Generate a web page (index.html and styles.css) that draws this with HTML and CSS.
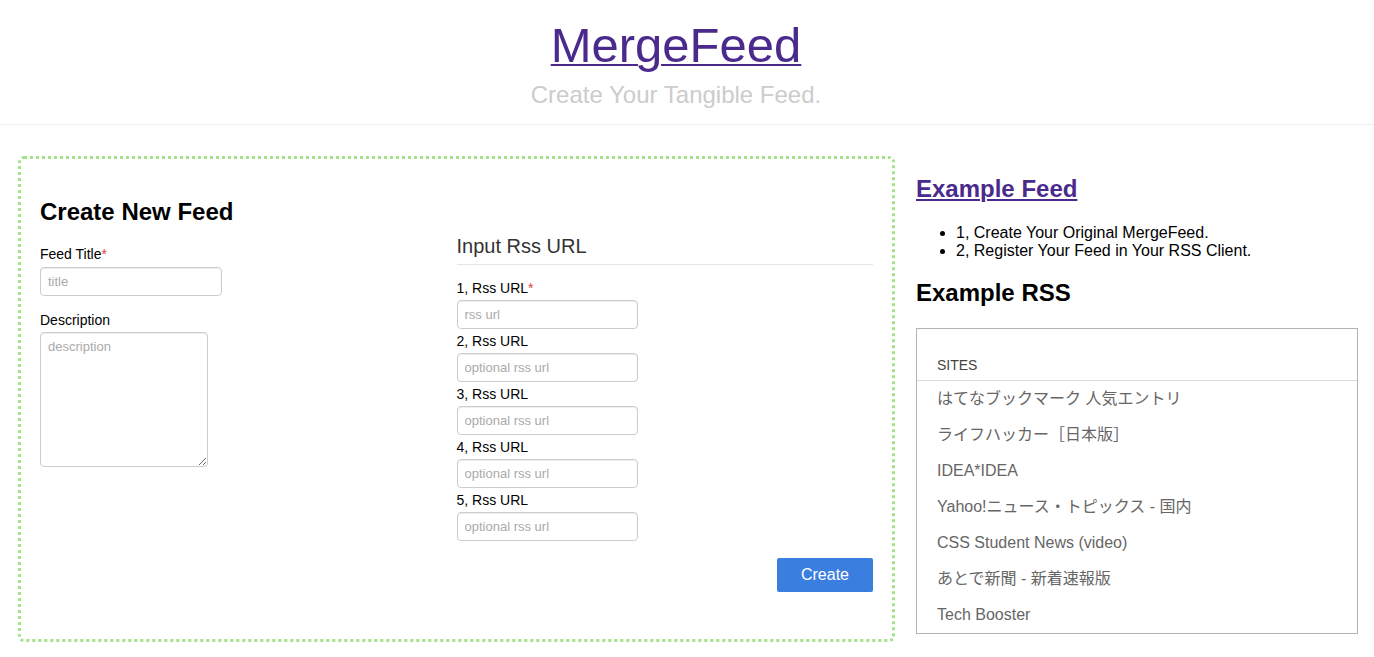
FILE: index.html
```html
<!DOCTYPE html>
<html lang="ja">
<head>
<meta charset="utf-8">
<title>MergeFeed</title>
<link rel="stylesheet" href="styles.css">
</head>
<body>
<header class="header">
  <h1 class="site-title"><a href="#">MergeFeed</a></h1>
  <p class="tagline">Create Your Tangible Feed.</p>
</header>
<div class="main">
  <form class="panel">
    <div class="col-left">
      <h2 class="form-title">Create New Feed</h2>
      <label class="field-label">Feed Title<span class="req">*</span></label>
      <input class="text-input title-input" type="text" placeholder="title">
      <label class="field-label desc-label">Description</label>
      <textarea class="text-area" placeholder="description"></textarea>
    </div>
    <div class="col-right">
      <div class="legend">Input Rss URL</div>
      <label class="field-label url-label">1, Rss URL<span class="req">*</span></label>
      <input class="text-input url-input" type="text" placeholder="rss url">
      <label class="field-label url-label">2, Rss URL</label>
      <input class="text-input url-input" type="text" placeholder="optional rss url">
      <label class="field-label url-label">3, Rss URL</label>
      <input class="text-input url-input" type="text" placeholder="optional rss url">
      <label class="field-label url-label">4, Rss URL</label>
      <input class="text-input url-input" type="text" placeholder="optional rss url">
      <label class="field-label url-label">5, Rss URL</label>
      <input class="text-input url-input" type="text" placeholder="optional rss url">
      <button class="btn-create" type="button">Create</button>
    </div>
  </form>
  <aside class="sidebar">
    <h2 class="side-title"><a href="#">Example Feed</a></h2>
    <ul class="steps">
      <li>1, Create Your Original MergeFeed.</li>
      <li>2, Register Your Feed in Your RSS Client.</li>
    </ul>
    <h2 class="side-title rss-title">Example RSS</h2>
    <div class="sites">
      <div class="sites-header">SITES</div>
      <ul class="sites-list">
        <li>はてなブックマーク 人気エントリ</li>
        <li>ライフハッカー［日本版］</li>
        <li>IDEA*IDEA</li>
        <li>Yahoo!ニュース・トピックス - 国内</li>
        <li>CSS Student News (video)</li>
        <li>あとで新聞 - 新着速報版</li>
        <li>Tech Booster</li>
      </ul>
    </div>
  </aside>
</div>
</body>
</html>
```

FILE: styles.css
```css
body {
  margin: 0;
  font-family: "Liberation Sans", "Noto Sans CJK JP", sans-serif;
  color: #000;
  background: #fff;
}

.header {
  text-align: center;
  padding: 19px 22px 16px 0;
  border-bottom: 1px solid #eee;
}

.site-title {
  margin: 0;
  font-size: 49px;
  line-height: 53px;
  font-weight: normal;
}

.site-title a {
  color: #4a2a8c;
  text-decoration: underline;
  text-decoration-thickness: 2px;
  text-underline-offset: 2px;
}

.tagline {
  margin: 10px 0 0;
  font-size: 24px;
  line-height: 26px;
  color: #ccc;
}

.main {
  display: flex;
  align-items: flex-start;
  gap: 21px;
  padding: 31px 0 0 18px;
}

.panel {
  width: 877px;
  box-sizing: border-box;
  border: 3px dotted #a5e38b;
  border-radius: 6px;
  padding: 40px 19px 47px;
  margin: 0;
  display: grid;
  grid-template-columns: 1fr 1fr;
}

.col-left,
.col-right {
  display: flex;
  flex-direction: column;
  align-items: flex-start;
}

.form-title {
  margin: 0 0 19px;
  font-size: 24px;
  line-height: 26px;
  font-weight: bold;
}

.field-label {
  display: block;
  font-size: 14px;
  line-height: 20px;
  margin-bottom: 3px;
}

.req {
  color: #e04040;
}

.desc-label {
  margin-top: 14px;
  margin-bottom: 2px;
}

.text-input,
.text-area {
  box-sizing: border-box;
  border: 1px solid #ccc;
  border-radius: 4px;
  box-shadow: inset 0 1px 1px rgba(0, 0, 0, 0.075);
  font-family: "Liberation Sans", sans-serif;
  font-size: 13px;
  color: #555;
  padding: 4px 7px;
  margin: 0;
  background: #fff;
}

.text-input::placeholder,
.text-area::placeholder {
  color: #aaa;
}

.title-input {
  width: 182px;
  height: 29px;
}

.text-area {
  width: 168px;
  height: 135px;
  padding: 6px 7px;
  resize: vertical;
}

.col-right {
  padding-top: 35px;
}

.legend {
  align-self: stretch;
  font-size: 20px;
  line-height: 24px;
  color: #333;
  padding-bottom: 6px;
  border-bottom: 1px solid #e5e5e5;
  margin-bottom: 13px;
}

.url-label {
  margin-bottom: 2px;
}

.url-input {
  width: 181px;
  height: 29px;
  margin-bottom: 2px;
}

.btn-create {
  align-self: flex-end;
  margin-top: 15px;
  width: 96px;
  height: 34px;
  border: none;
  border-radius: 2px;
  background: #3a7ee0;
  color: #fff;
  font-family: "Liberation Sans", sans-serif;
  font-size: 16px;
  padding: 0;
}

.sidebar {
  width: 442px;
  margin-top: 20px;
}

.side-title {
  margin: 0 0 22px;
  font-size: 24px;
  line-height: 26px;
  font-weight: bold;
}

.side-title a {
  color: #4a2a8c;
  text-decoration: underline;
  text-decoration-thickness: 2px;
  text-underline-offset: 2px;
}

.rss-title {
  margin-top: 20px;
}

.steps {
  margin: 0;
  padding-left: 40px;
  font-size: 16px;
  line-height: 18px;
}

.sites {
  border: 1px solid #b3b3b3;
  padding-top: 26px;
}

.sites-header {
  font-size: 14px;
  line-height: 20px;
  color: #444;
  padding: 0 20px 5px;
  border-bottom: 1px solid #ddd;
}

.sites-list {
  list-style: none;
  margin: 0;
  padding: 0;
}

.sites-list li {
  font-size: 16px;
  line-height: 36px;
  color: #666;
  padding-left: 20px;
}
```
